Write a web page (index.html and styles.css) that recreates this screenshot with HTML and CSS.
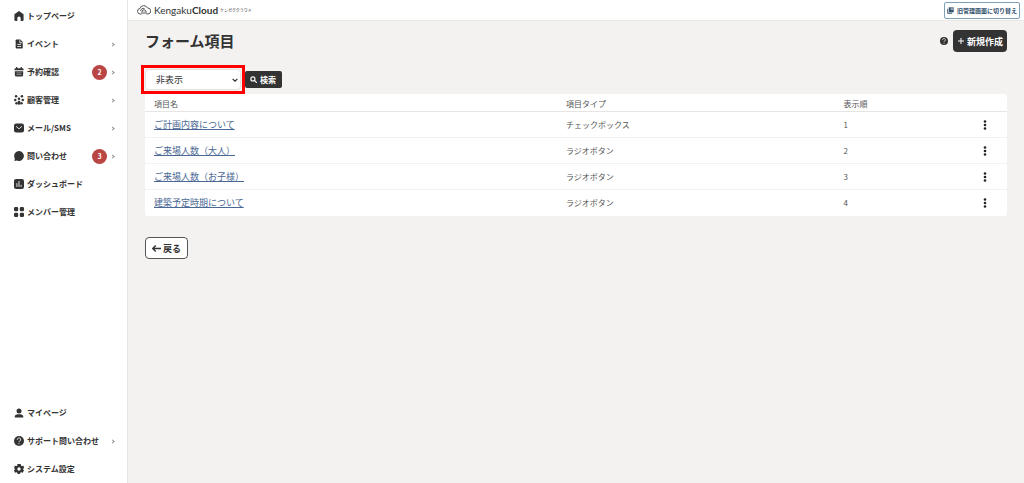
FILE: index.html
```html
<!DOCTYPE html>
<html lang="ja">
<head>
    <meta charset="UTF-8">
    <meta name="viewport" content="width=device-width, initial-scale=1.0">
    <title>フォーム項目 | KengakuCloud</title>
    <link rel="stylesheet" href="styles.css">
</head>
<body>

    <aside class="sidebar">
        <nav class="menu">
            <a href="#" class="menu-item">
                <svg class="icon" viewBox="0 0 24 24"><path d="M12 0 1 8v13a3 3 0 0 0 3 3h4v-7a4 4 0 0 1 8 0v7h4a3 3 0 0 0 3-3V8z"/></svg>
                <span class="label">トップページ</span>
            </a>
            <a href="#" class="menu-item">
                <svg class="icon" viewBox="0 0 24 24"><path d="M6 1h9l6 6v14a2 2 0 0 1-2 2H6a2 2 0 0 1-2-2V3a2 2 0 0 1 2-2z"/><path class="cut" d="M14 3v6h6M8 13h9M8 18h9"/></svg>
                <span class="label">イベント</span>
                <span class="arrow"></span>
            </a>
            <a href="#" class="menu-item">
                <svg class="icon" viewBox="0 0 24 24"><path d="M5 0h3v3h8V0h3v3h1a3 3 0 0 1 3 3v2H1V6a3 3 0 0 1 3-3h1zM2 10h20v9a4 4 0 0 1-4 4H6a4 4 0 0 1-4-4z"/><path class="cut thin" d="M6 14h12M6 18h12"/></svg>
                <span class="label">予約確認</span>
                <span class="badge">2</span>
                <span class="arrow"></span>
            </a>
            <a href="#" class="menu-item">
                <svg class="icon" viewBox="0 0 24 24"><circle cx="5" cy="3" r="3"/><circle cx="19" cy="3" r="3"/><circle cx="12" cy="9" r="3"/><circle cx="3" cy="12" r="3"/><circle cx="21" cy="12" r="3"/><circle cx="6" cy="20" r="3"/><circle cx="18" cy="20" r="3"/><path d="M9 14h6v9H9z"/></svg>
                <span class="label">顧客管理</span>
                <span class="arrow"></span>
            </a>
            <a href="#" class="menu-item">
                <svg class="icon" viewBox="0 0 24 24"><rect x="0" y="1" width="24" height="22" rx="5"/><path class="cut" d="m5 8 7 6 7-6"/></svg>
                <span class="label">メール/SMS</span>
                <span class="arrow"></span>
            </a>
            <a href="#" class="menu-item">
                <svg class="icon" viewBox="0 0 24 24"><path d="M12 0a12 12 0 1 1-5 23l-6 1 1-6A12 12 0 0 1 12 0z"/></svg>
                <span class="label">問い合わせ</span>
                <span class="badge">3</span>
                <span class="arrow"></span>
            </a>
            <a href="#" class="menu-item">
                <svg class="icon" viewBox="0 0 24 24"><rect x="0" y="0" width="24" height="24" rx="5"/><path class="cut" d="M7 10v9M12 5v14M17 14v5"/></svg>
                <span class="label">ダッシュボード</span>
            </a>
            <a href="#" class="menu-item">
                <svg class="icon" viewBox="0 0 24 24"><rect x="0" y="0" width="10" height="10" rx="3"/><rect x="14" y="0" width="10" height="10" rx="3"/><rect x="0" y="14" width="10" height="10" rx="3"/><rect x="14" y="14" width="10" height="10" rx="3"/></svg>
                <span class="label">メンバー管理</span>
            </a>
        </nav>
        <nav class="menu">
            <a href="#" class="menu-item">
                <svg class="icon" viewBox="0 0 24 24"><circle cx="12" cy="7" r="6"/><path d="M2 23v-3c0-4 5-5 10-5s10 1 10 5v3z"/></svg>
                <span class="label">マイページ</span>
            </a>
            <a href="#" class="menu-item">
                <svg class="icon" viewBox="0 0 24 24"><circle cx="12" cy="12" r="12"/><path class="cut" d="M8 9a4 4 0 1 1 6 3c-2 1-2 2-2 3M12 17v3"/></svg>
                <span class="label">サポート問い合わせ</span>
                <span class="arrow"></span>
            </a>
            <a href="#" class="menu-item">
                <svg class="icon" viewBox="0 0 24 24"><path fill-rule="evenodd" d="M8 0h8l1 4 2 1 4-1 1 6-3 2 3 3-3 6-4-1-2 1-1 3H9l-1-3-2-1-4 1-2-6 3-3-3-2 2-6 4 1 2-1zM12 8a4 4 0 1 0 0 8 4 4 0 0 0 0-8z"/></svg>
                <span class="label">システム設定</span>
            </a>
        </nav>
    </aside>

    <div class="page">
        <header class="topbar">
            <a href="#" class="logo">
                <svg class="logo-mark" viewBox="0 0 28 20"><path d="M9 18H7a5.500 5.500 0 0 1-1-11 8 8 0 0 1 15-1 6 6 0 0 1 1 12h-3"/><path d="M10 18v-6l4-3 4 3v6M14 18v-5M7 12c1-4 4-6 8-5"/></svg>
                <span class="logo-name">Kengaku<b>Cloud</b></span>
                <span class="logo-kana">ケンガククラウド</span>
            </a>
            <button type="button" class="switch">
                <svg class="switch-icon" viewBox="0 0 24 24"><path d="M6 1h17v17H6z"/><path d="M1 6h3v14h14v3H1z"/><path class="cut" d="M14 2v7l3-2 3 2V2"/></svg>
                旧管理画面に切り替え
            </button>
        </header>

        <main class="content">
            <div class="title-row">
                <h1>フォーム項目</h1>
                <button type="button" class="help" aria-label="ヘルプ">
                    <svg viewBox="0 0 24 24"><circle cx="12" cy="12" r="12"/><path class="cut" d="M8 9a4 4 0 1 1 6 3c-2 1-2 2-2 3M12 17v3"/></svg>
                </button>
                <button type="button" class="create">
                    <svg viewBox="0 0 12 12"><path d="M6 0v12M0 6h12"/></svg>
                    新規作成
                </button>
            </div>

            <form class="filter">
                <div class="select-frame">
                    <select aria-label="表示状態">
                        <option>非表示</option>
                        <option>表示</option>
                    </select>
                    <svg class="select-arrow" viewBox="0 0 10 6"><path d="m1 1 4 4 4-4"/></svg>
                </div>
                <button type="button" class="search">
                    <svg viewBox="0 0 12 12"><circle cx="5" cy="5" r="3.500"/><path d="m8 8 4 4"/></svg>
                    検索
                </button>
            </form>

            <table class="items">
                <thead>
                    <tr>
                        <th class="col-name">項目名</th>
                        <th class="col-type">項目タイプ</th>
                        <th>表示順</th>
                        <th class="col-menu"></th>
                    </tr>
                </thead>
                <tbody>
                    <tr>
                        <td><a href="#">ご計画内容について</a></td>
                        <td>チェックボックス</td>
                        <td>1</td>
                        <td><button type="button" class="more" aria-label="メニュー"><svg viewBox="0 0 4 10"><circle cx="2" cy="1.500" r="1.300"/><circle cx="2" cy="5" r="1.300"/><circle cx="2" cy="8.500" r="1.300"/></svg></button></td>
                    </tr>
                    <tr>
                        <td><a href="#">ご来場人数（大人）</a></td>
                        <td>ラジオボタン</td>
                        <td>2</td>
                        <td><button type="button" class="more" aria-label="メニュー"><svg viewBox="0 0 4 10"><circle cx="2" cy="1.500" r="1.300"/><circle cx="2" cy="5" r="1.300"/><circle cx="2" cy="8.500" r="1.300"/></svg></button></td>
                    </tr>
                    <tr>
                        <td><a href="#">ご来場人数（お子様）</a></td>
                        <td>ラジオボタン</td>
                        <td>3</td>
                        <td><button type="button" class="more" aria-label="メニュー"><svg viewBox="0 0 4 10"><circle cx="2" cy="1.500" r="1.300"/><circle cx="2" cy="5" r="1.300"/><circle cx="2" cy="8.500" r="1.300"/></svg></button></td>
                    </tr>
                    <tr>
                        <td><a href="#">建築予定時期について</a></td>
                        <td>ラジオボタン</td>
                        <td>4</td>
                        <td><button type="button" class="more" aria-label="メニュー"><svg viewBox="0 0 4 10"><circle cx="2" cy="1.500" r="1.300"/><circle cx="2" cy="5" r="1.300"/><circle cx="2" cy="8.500" r="1.300"/></svg></button></td>
                    </tr>
                </tbody>
            </table>

            <button type="button" class="back">
                <svg viewBox="0 0 12 12"><path d="M12 6H1M5 2 1 6l4 4"/></svg>
                戻る
            </button>
        </main>
    </div>

</body>
</html>
```
FILE: styles.css
```css
* {
    box-sizing: border-box;
}

body {
    margin: 0;
    display: flex;
    min-height: 100vh;
    background-color: #f3f2f0;
    color: #333;
    font-family: "Noto Sans CJK JP", sans-serif;
    font-size: 8px;
    line-height: 12px;
}

a {
    color: inherit;
    text-decoration: none;
}

button,
select {
    font-family: inherit;
    color: inherit;
    cursor: pointer;
}

button {
    display: flex;
    align-items: center;
    justify-content: center;
    padding: 0;
    border: none;
    background: none;
    font-weight: bold;
    white-space: nowrap;
}

svg {
    flex: none;
}

/* アイコンの白抜き線 */
.cut {
    fill: none;
    stroke: #fff;
    stroke-width: 2;
}

.thin {
    stroke-width: 1;
}

/* サイドバー */
.sidebar {
    display: flex;
    flex-direction: column;
    justify-content: space-between;
    flex: none;
    width: 128px;
    padding-top: 2px;
    background-color: #fff;
    border-right: 1px solid #e4e3e0;
}

.menu-item {
    display: flex;
    align-items: center;
    height: 28px;
    padding: 0 13px 0 14px;
    font-weight: bold;
}

.icon {
    width: 10px;
    height: 10px;
    margin-right: 3px;
    fill: #333;
}

.label {
    flex: 1;
    white-space: nowrap;
}

.badge {
    width: 15px;
    height: 15px;
    margin-right: 4px;
    border-radius: 50%;
    background-color: #b94545;
    color: #fff;
    font-size: 7px;
    line-height: 15px;
    text-align: center;
}

.arrow {
    width: 3px;
    height: 3px;
    border-top: 1px solid #888;
    border-right: 1px solid #888;
    transform: rotate(45deg);
}

/* ヘッダー */
.page {
    flex: 1;
    min-width: 0;
}

.topbar {
    display: flex;
    align-items: center;
    justify-content: space-between;
    height: 21px;
    padding: 0 4px 0 9px;
    background-color: #fff;
    border-bottom: 1px solid #e9e8e5;
}

.logo {
    display: flex;
    align-items: center;
}

.logo-mark {
    width: 14px;
    height: 10px;
    margin-right: 3px;
    fill: none;
    stroke: #555;
    stroke-width: 2;
}

.logo-name {
    font-family: Lato, sans-serif;
    font-size: 10px;
}

.logo-kana {
    margin-left: 2px;
    font-size: 4px;
}

.switch {
    height: 17px;
    padding: 0 2px;
    border: 1px solid #7e9fb8;
    border-radius: 2px;
    background-color: #fff;
    color: #31506c;
    font-size: 6px;
}

.switch-icon {
    width: 7px;
    height: 7px;
    margin-right: 3px;
    fill: #31506c;
}

/* コンテンツ */
.content {
    padding: 9px 17px;
}

.title-row {
    display: flex;
    align-items: center;
}

h1 {
    flex: 1;
    margin: 0;
    font-size: 15px;
    line-height: 22px;
}

.help {
    margin-right: 5px;
}

.help svg {
    width: 8px;
    height: 8px;
    fill: #333;
}

.create {
    height: 22px;
    padding: 0 4px 0 5px;
    border-radius: 4px;
    background-color: #333;
    color: #fff;
    font-size: 9px;
}

.create svg {
    width: 6px;
    height: 6px;
    margin-right: 3px;
    stroke: #fff;
    stroke-width: 2;
}

.filter {
    display: flex;
    align-items: center;
    gap: 4px;
    margin: 17px 0 4px;
}

.select-frame {
    position: relative;
    outline: 3px solid #f00;
    outline-offset: 1px;
}

.select-frame select {
    display: block;
    width: 96px;
    height: 21px;
    padding: 0 10px;
    appearance: none;
    border: 1px solid #e4e3e0;
    border-radius: 4px;
    background-color: #fff;
    font-size: 9px;
}

.select-arrow {
    position: absolute;
    top: 9px;
    right: 3px;
    width: 6px;
    height: 4px;
    fill: none;
    stroke: #333;
    stroke-width: 2;
    pointer-events: none;
}

.search {
    height: 17px;
    padding: 0 6px 0 5px;
    border-radius: 2px;
    background-color: #333;
    color: #fff;
    font-size: 8px;
}

.search svg {
    width: 7px;
    height: 7px;
    margin-right: 3px;
    fill: none;
    stroke: #fff;
    stroke-width: 2;
}

/* 項目一覧 */
.items {
    width: 100%;
    table-layout: fixed;
    border-spacing: 0;
    border-radius: 3px;
    background-color: #fff;
    color: #555;
}

.items th,
.items td {
    padding: 0 9px;
    text-align: left;
    font-weight: normal;
}

.items th {
    height: 18px;
    padding-top: 2px;
    border-bottom: 1px solid #e6e5e3;
}

.items td {
    height: 26px;
    border-bottom: 1px solid #f3f2f0;
}

.items tr:last-child td {
    border-bottom: none;
}

.items a {
    color: #4a6894;
    font-size: 9px;
    text-decoration: underline;
    text-underline-offset: 1px;
}

.items .col-name {
    width: 47.8%;
}

.items .col-type {
    width: 32.2%;
}

.items .col-menu {
    width: 44px;
}

.more {
    width: 100%;
}

.more svg {
    width: 4px;
    height: 10px;
    fill: #222;
}

.back {
    height: 22px;
    margin-top: 21px;
    padding: 0 6px;
    border: 1px solid #555;
    border-radius: 4px;
    background-color: #fff;
    font-size: 9px;
}

.back svg {
    width: 9px;
    height: 9px;
    margin-right: 2px;
    fill: none;
    stroke: #333;
    stroke-width: 2;
}
```
